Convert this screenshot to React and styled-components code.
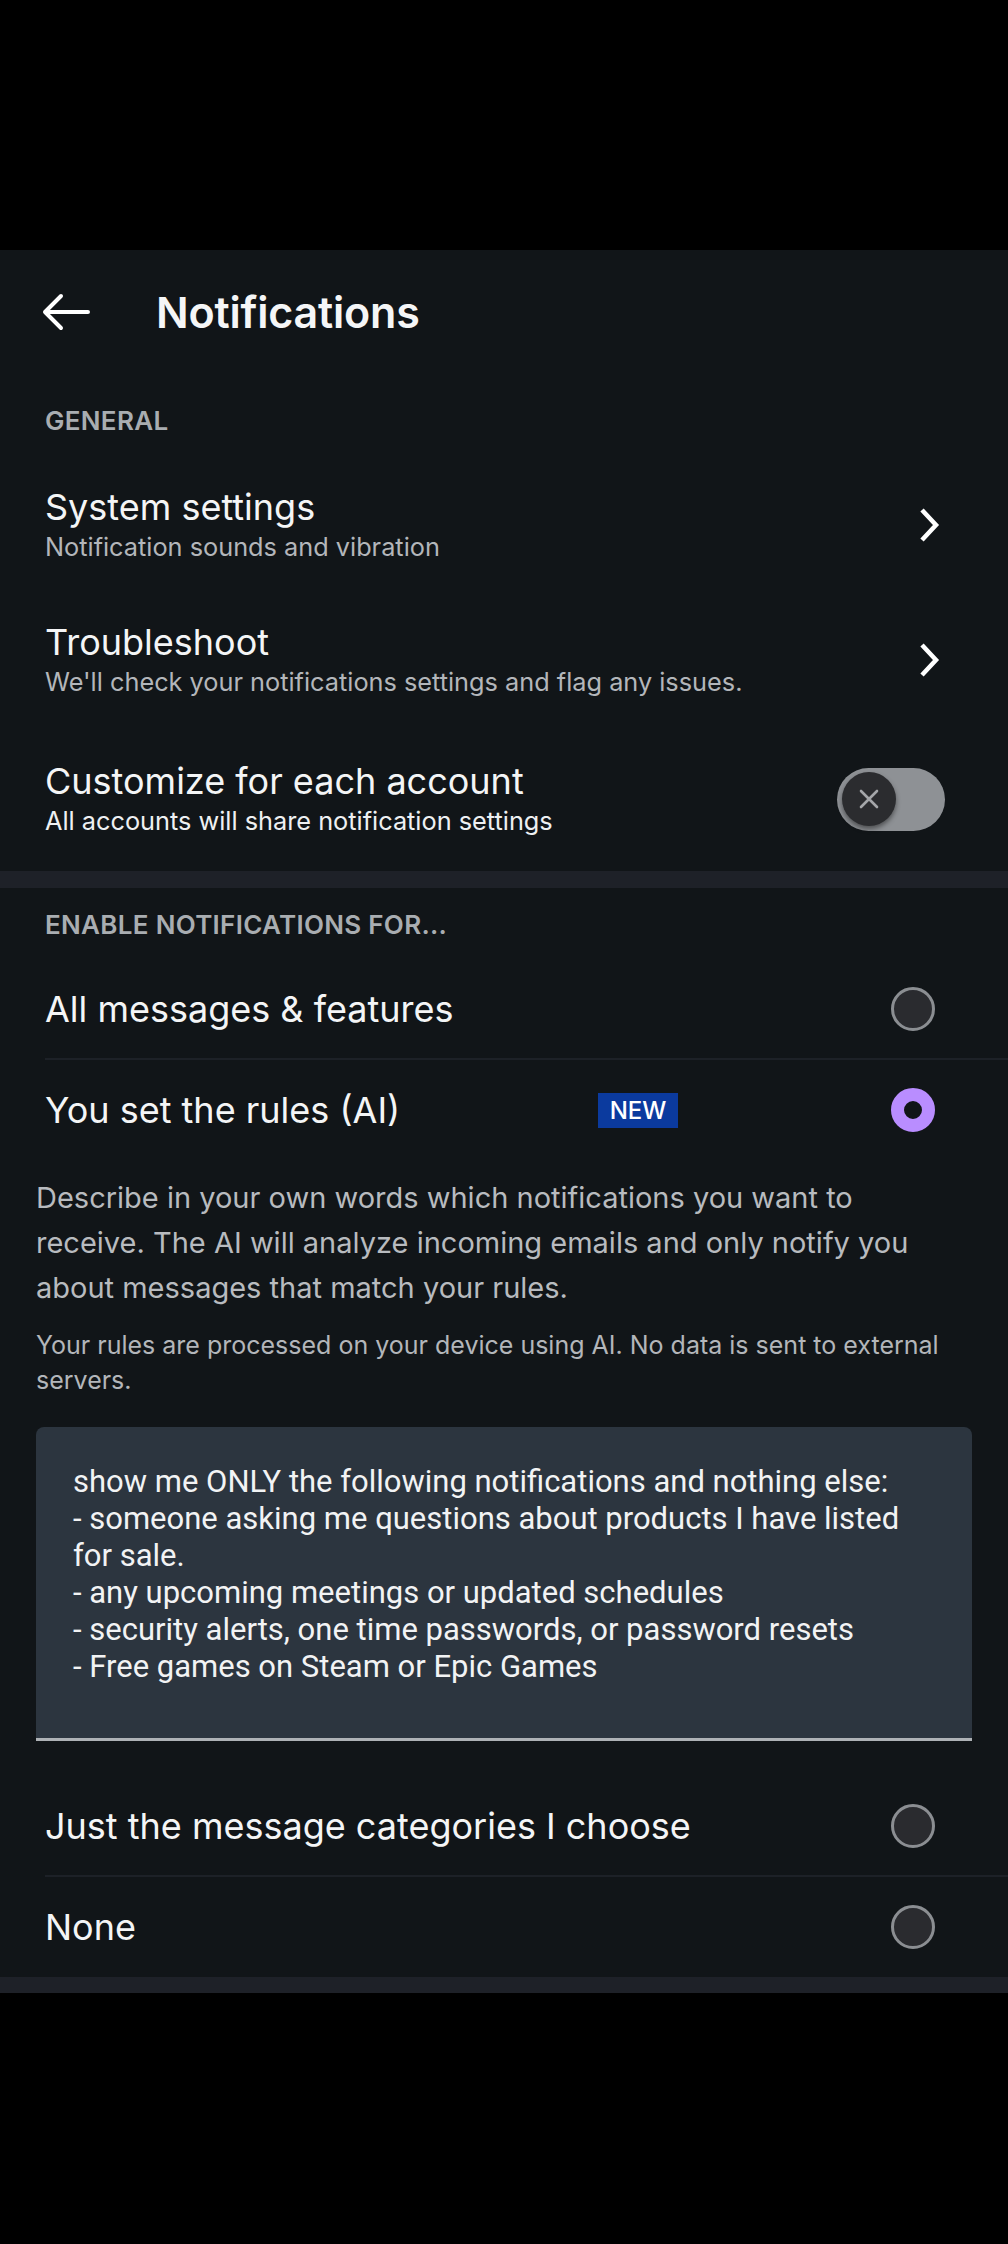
import React from 'react'
import styled, { createGlobalStyle } from 'styled-components'

const RULES = `show me ONLY the following notifications and nothing else:
- someone asking me questions about products I have listed for sale.
- any upcoming meetings or updated schedules
- security alerts, one time passwords, or password resets
- Free games on Steam or Epic Games`

const GlobalStyle = createGlobalStyle`
  html, body {
    margin: 0;
    padding: 0;
    background: #000;
  }
  body {
    font-family: Inter, "Noto Sans", sans-serif;
    -webkit-font-smoothing: antialiased;
  }
  * { box-sizing: border-box; }
`

const BackIcon = () => (
  <svg width="48" height="38" viewBox="0 0 48 38" fill="none" stroke="#fff" strokeWidth="4" strokeLinecap="round" strokeLinejoin="round">
    <path d="M46 19H3M19 3L3 19l16 16" />
  </svg>
)

const Chevron = () => (
  <ChevronBox width="22" height="36" viewBox="0 0 22 36" fill="none" stroke="#fff" strokeWidth="4.5">
    <path d="M4 3l14 15L4 33" />
  </ChevronBox>
)

const Toggle = () => (
  <Track>
    <Thumb>
      <svg width="22" height="22" viewBox="0 0 22 22" stroke="#a4a6a9" strokeWidth="2.6" strokeLinecap="round">
        <path d="M3 3l16 16M19 3L3 19" />
      </svg>
    </Thumb>
  </Track>
)

const App = () => (
  <Phone>
    <GlobalStyle />
    <StatusArea />
    <Screen>
      <Header>
        <BackIcon />
        <Title>Notifications</Title>
      </Header>

      <SectionLabel top={32} bottom={21}>GENERAL</SectionLabel>

      <SettingRow>
        <RowText>
          <RowTitle>System settings</RowTitle>
          <RowSub>Notification sounds and vibration</RowSub>
        </RowText>
        <Chevron />
      </SettingRow>

      <SettingRow>
        <RowText>
          <RowTitle>Troubleshoot</RowTitle>
          <RowSub>We'll check your notifications settings and flag any issues.</RowSub>
        </RowText>
        <Chevron />
      </SettingRow>

      <SettingRow tall>
        <RowText>
          <RowTitle>Customize for each account</RowTitle>
          <RowSub bright>All accounts will share notification settings</RowSub>
        </RowText>
        <Toggle />
      </SettingRow>

      <Band height={17} />

      <SectionLabel top={22} bottom={20}>ENABLE NOTIFICATIONS FOR...</SectionLabel>

      <OptionRow divider>
        <OptionLabel>All messages &amp; features</OptionLabel>
        <Radio />
      </OptionRow>

      <OptionRow>
        <OptionLabel>You set the rules (AI)</OptionLabel>
        <NewBadge>NEW</NewBadge>
        <Radio checked />
      </OptionRow>

      <Description>
        Describe in your own words which notifications you want to receive. The AI will analyze incoming emails and only notify you about messages that match your rules.
      </Description>
      <FinePrint>
        Your rules are processed on your device using AI. No data is sent to external servers.
      </FinePrint>

      <RulesBox readOnly value={RULES} spellCheck={false} />

      <OptionRow divider spaced>
        <OptionLabel>Just the message categories I choose</OptionLabel>
        <Radio />
      </OptionRow>

      <OptionRow>
        <OptionLabel>None</OptionLabel>
        <Radio />
      </OptionRow>

      <Band height={16} />
    </Screen>
  </Phone>
)

const Phone = styled.div`
  width: 1008px;
  min-height: 2244px;
  background: #000;
`

const StatusArea = styled.div`
  height: 250px;
`

const Screen = styled.div`
  background: #111518;
  color: #f3f4f5;
`

const Header = styled.header`
  height: 124px;
  display: flex;
  align-items: center;
  gap: 66px;
  padding-left: 42px;
`

const Title = styled.h1`
  margin: 0;
  font-size: 43px;
  font-weight: 600;
  line-height: 52px;
  letter-spacing: -0.2px;
  color: #f5f6f7;
`

const SectionLabel = styled.div`
  padding: ${({ top }) => top}px 45px ${({ bottom }) => bottom}px;
  font-size: 26px;
  font-weight: 600;
  line-height: 30px;
  letter-spacing: 0.3px;
  color: #a9adb1;
`

const SettingRow = styled.div`
  height: ${({ tall }) => (tall ? 144 : 135)}px;
  display: flex;
  align-items: center;
  justify-content: space-between;
  padding: 0 63px 0 45px;
`

const RowText = styled.div`
  display: flex;
  flex-direction: column;
`

const RowTitle = styled.div`
  font-size: 36px;
  line-height: 44px;
  color: #f4f5f6;
`

const RowSub = styled.div`
  font-size: 25.3px;
  line-height: 36px;
  color: ${({ bright }) => (bright ? '#eef0f2' : '#b3b6ba')};
`

const ChevronBox = styled.svg`
  margin-right: 5px;
  flex-shrink: 0;
`

const Track = styled.span`
  width: 108px;
  height: 63px;
  border-radius: 32px;
  background: #8e9195;
  display: flex;
  align-items: center;
  padding-left: 5px;
`

const Thumb = styled.span`
  width: 54px;
  height: 54px;
  border-radius: 50%;
  background: #2b2c2f;
  box-shadow: 0 3px 5px rgba(0, 0, 0, 0.45);
  display: flex;
  align-items: center;
  justify-content: center;
`

const Band = styled.div`
  height: ${({ height }) => height}px;
  background: #1e2128;
`

const OptionRow = styled.div`
  height: 100px;
  margin-left: 45px;
  margin-top: ${({ spaced }) => (spaced ? 36 : 0)}px;
  padding-right: 73px;
  display: flex;
  align-items: center;
  border-bottom: ${({ divider }) => (divider ? '2px solid #1d2127' : 'none')};
`

const OptionLabel = styled.div`
  flex: 1;
  font-size: 36px;
  line-height: 44px;
  color: #f4f5f6;
`

const NewBadge = styled.span`
  width: 80px;
  height: 35px;
  margin-right: 213px;
  background: #0b3a9e;
  color: #fff;
  font-size: 24px;
  font-weight: 500;
  line-height: 35px;
  text-align: center;
`

const Radio = styled.span`
  width: 44px;
  height: 44px;
  flex-shrink: 0;
  border-radius: 50%;
  border: ${({ checked }) => (checked ? '13px solid #b98dff' : '3px solid #8b8e92')};
  background: ${({ checked }) => (checked ? '#111518' : '#2a2b2f')};
`

const Description = styled.p`
  margin: 15px 72px 0 36px;
  font-size: 29px;
  line-height: 45px;
  color: #b8bbbf;
`

const FinePrint = styled.p`
  margin: 18px 50px 0 36px;
  font-size: 25px;
  line-height: 35px;
  color: #b3b6ba;
`

const RulesBox = styled.textarea`
  display: block;
  width: 936px;
  height: 314px;
  margin: 29px 36px 0;
  padding: 36px 50px 0 37px;
  border: none;
  border-bottom: 3px solid #aeb2b6;
  border-radius: 8px 8px 0 0;
  background: #2c353f;
  color: #f2f3f4;
  font-family: Roboto, "Liberation Sans", sans-serif;
  font-size: 31px;
  line-height: 37px;
  resize: none;
  outline: none;
  overflow: hidden;
`

export default App
